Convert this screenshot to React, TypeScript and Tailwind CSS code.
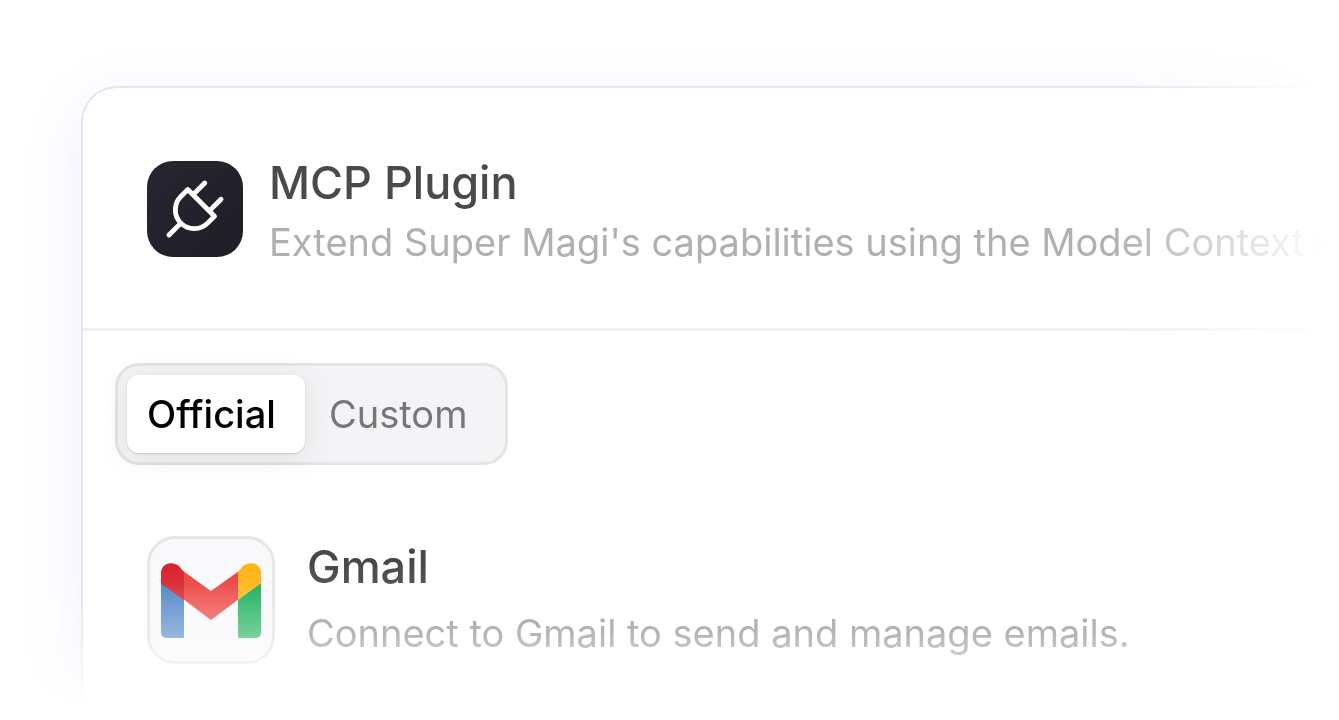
import { useState } from "react";

const tabs = ["Official", "Custom"];

function PlugIcon() {
  return (
    <svg
      viewBox="0 0 24 24"
      className="size-[78px]"
      fill="none"
      stroke="currentColor"
      strokeWidth="1.5"
      strokeLinecap="round"
      strokeLinejoin="round"
      aria-hidden="true"
    >
      <path d="M9.785 6l8.215 8.215l-2.054 2.054a5.81 5.81 0 1 1 -8.215 -8.215l2.054 -2.054z" />
      <path d="M4 20l3.5 -3.5" />
      <path d="M15 4l-3.5 3.5" />
      <path d="M20 9l-3.5 3.5" />
    </svg>
  );
}

function GmailLogo() {
  return (
    <svg
      viewBox="0 0 100 75"
      className="w-[100px] [mask-image:linear-gradient(to_bottom,black_25%,rgb(0_0_0/0.72))]"
      aria-hidden="true"
    >
      <path d="M0 19L23 36V75H6Q0 75 0 69Z" fill="#457fc4" />
      <path d="M100 19L77 36V75H94Q100 75 100 69Z" fill="#0dac50" />
      <path d="M22 8L50 28L78 8V36L50 57L22 36Z" fill="#ec403c" />
      <path d="M23 9V37L0 20.500V10C0 1 10 -3 18 3Q21 7 23 9Z" fill="#d8202c" />
      <path d="M77 9V37L100 20.500V10C100 1 90 -3 82 3Q79 7 77 9Z" fill="#fdb515" />
    </svg>
  );
}

export default function App() {
  const [active, setActive] = useState("Official");

  return (
    <main className="h-screen overflow-hidden bg-white font-['Inter','Liberation_Sans',sans-serif]">
      <div className="h-full overflow-hidden pt-[86px] pl-[81px] [mask-image:linear-gradient(to_right,black_83%,transparent_99%),linear-gradient(to_bottom,black_78%,rgb(0_0_0/0.78)_88%,transparent_98%)] [mask-composite:intersect]">
        <section className="h-full rounded-tl-[36px] border-t-2 border-l-2 border-[#e4e6f0] bg-white shadow-[0_16px_64px_rgb(80_100_255/0.1)]">
          <header className="flex items-center gap-[26px] border-b-3 border-[#efeff1] pt-[62px] pb-[60px] pl-16">
            <div className="flex size-24 shrink-0 items-center justify-center rounded-[26px] bg-linear-to-br from-[#272630] to-[#1f1e27] text-white">
              <PlugIcon />
            </div>
            <div className="whitespace-nowrap">
              <h1 className="text-[45px] leading-[66px] font-medium text-[#4a4a4c]">
                MCP Plugin
              </h1>
              <p className="text-[38px] leading-[52px] font-normal text-[#b0b0b2]">
                Extend Super Magi's capabilities using the Model Context Protocol
              </p>
            </div>
          </header>

          <div className="pt-8 pl-8">
            <div className="inline-flex rounded-3xl border-3 border-[#e4e4e7] bg-[#f4f4f6] p-[9px]">
              {tabs.map((tab) => (
                <button
                  key={tab}
                  type="button"
                  aria-pressed={tab === active}
                  onClick={() => setActive(tab)}
                  className={
                    tab === active
                      ? "h-[78px] w-[178px] rounded-xl bg-white pl-5 text-left text-[38px] font-medium text-black shadow-[0_1px_2px_rgb(0_0_0/0.14),0_4px_32px_rgb(0_0_0/0.09)]"
                      : "h-[78px] w-[191px] pl-6 text-left text-[38px] font-normal text-[#777779]"
                  }
                >
                  {tab}
                </button>
              ))}
            </div>
          </div>

          <article className="flex items-center gap-8 pt-[69px] pl-16">
            <div className="flex size-32 shrink-0 items-center justify-center rounded-[28px] border-3 border-[#e6e6e9] bg-[#f9f9fb]">
              <GmailLogo />
            </div>
            <div className="whitespace-nowrap">
              <h2 className="text-[45px] leading-[66px] font-medium text-[#48484a]">
                Gmail
              </h2>
              <p className="text-[38px] leading-[66px] font-normal text-[#a0a0a3]">
                Connect to Gmail to send and manage emails.
              </p>
            </div>
          </article>
        </section>
      </div>
    </main>
  );
}
